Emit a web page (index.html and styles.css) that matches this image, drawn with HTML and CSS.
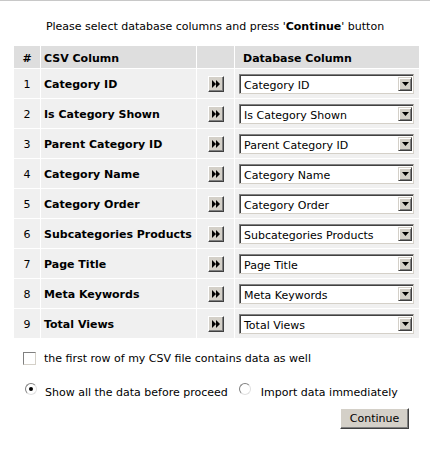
FILE: index.html
```html
<!DOCTYPE html>
<html>
<head>
<meta charset="utf-8">
<link rel="stylesheet" href="styles.css">
</head>
<body>
<div class="topline"></div>
<p class="intro">Please select database columns and press '<b>Continue</b>' button</p>
<div class="grid">
  <div class="hd num">#</div>
  <div class="hd csv">CSV Column</div>
  <div class="hd"></div>
  <div class="hd db">Database Column</div>

  <div class="c num">1</div><div class="c csv">Category ID</div><div class="c act"><span class="ff"><svg width="10" height="8" viewBox="0 0 10 8"><path d="M1 0L5 4L1 8ZM5 0L9 4L5 8Z" fill="#000"/></svg></span></div><div class="c db"><div class="sel"><span class="val">Category ID</span><span class="arr"><svg width="7" height="4" viewBox="0 0 7 4"><path d="M0 0H7L3.5 4Z" fill="#000"/></svg></span></div></div>

  <div class="c num">2</div><div class="c csv">Is Category Shown</div><div class="c act"><span class="ff"><svg width="10" height="8" viewBox="0 0 10 8"><path d="M1 0L5 4L1 8ZM5 0L9 4L5 8Z" fill="#000"/></svg></span></div><div class="c db"><div class="sel"><span class="val">Is Category Shown</span><span class="arr"><svg width="7" height="4" viewBox="0 0 7 4"><path d="M0 0H7L3.5 4Z" fill="#000"/></svg></span></div></div>

  <div class="c num">3</div><div class="c csv">Parent Category ID</div><div class="c act"><span class="ff"><svg width="10" height="8" viewBox="0 0 10 8"><path d="M1 0L5 4L1 8ZM5 0L9 4L5 8Z" fill="#000"/></svg></span></div><div class="c db"><div class="sel"><span class="val">Parent Category ID</span><span class="arr"><svg width="7" height="4" viewBox="0 0 7 4"><path d="M0 0H7L3.5 4Z" fill="#000"/></svg></span></div></div>

  <div class="c num">4</div><div class="c csv">Category Name</div><div class="c act"><span class="ff"><svg width="10" height="8" viewBox="0 0 10 8"><path d="M1 0L5 4L1 8ZM5 0L9 4L5 8Z" fill="#000"/></svg></span></div><div class="c db"><div class="sel"><span class="val">Category Name</span><span class="arr"><svg width="7" height="4" viewBox="0 0 7 4"><path d="M0 0H7L3.5 4Z" fill="#000"/></svg></span></div></div>

  <div class="c num">5</div><div class="c csv">Category Order</div><div class="c act"><span class="ff"><svg width="10" height="8" viewBox="0 0 10 8"><path d="M1 0L5 4L1 8ZM5 0L9 4L5 8Z" fill="#000"/></svg></span></div><div class="c db"><div class="sel"><span class="val">Category Order</span><span class="arr"><svg width="7" height="4" viewBox="0 0 7 4"><path d="M0 0H7L3.5 4Z" fill="#000"/></svg></span></div></div>

  <div class="c num">6</div><div class="c csv">Subcategories Products</div><div class="c act"><span class="ff"><svg width="10" height="8" viewBox="0 0 10 8"><path d="M1 0L5 4L1 8ZM5 0L9 4L5 8Z" fill="#000"/></svg></span></div><div class="c db"><div class="sel"><span class="val">Subcategories Products</span><span class="arr"><svg width="7" height="4" viewBox="0 0 7 4"><path d="M0 0H7L3.5 4Z" fill="#000"/></svg></span></div></div>

  <div class="c num">7</div><div class="c csv">Page Title</div><div class="c act"><span class="ff"><svg width="10" height="8" viewBox="0 0 10 8"><path d="M1 0L5 4L1 8ZM5 0L9 4L5 8Z" fill="#000"/></svg></span></div><div class="c db"><div class="sel"><span class="val">Page Title</span><span class="arr"><svg width="7" height="4" viewBox="0 0 7 4"><path d="M0 0H7L3.5 4Z" fill="#000"/></svg></span></div></div>

  <div class="c num">8</div><div class="c csv">Meta Keywords</div><div class="c act"><span class="ff"><svg width="10" height="8" viewBox="0 0 10 8"><path d="M1 0L5 4L1 8ZM5 0L9 4L5 8Z" fill="#000"/></svg></span></div><div class="c db"><div class="sel"><span class="val">Meta Keywords</span><span class="arr"><svg width="7" height="4" viewBox="0 0 7 4"><path d="M0 0H7L3.5 4Z" fill="#000"/></svg></span></div></div>

  <div class="c num">9</div><div class="c csv">Total Views</div><div class="c act"><span class="ff"><svg width="10" height="8" viewBox="0 0 10 8"><path d="M1 0L5 4L1 8ZM5 0L9 4L5 8Z" fill="#000"/></svg></span></div><div class="c db"><div class="sel"><span class="val">Total Views</span><span class="arr"><svg width="7" height="4" viewBox="0 0 7 4"><path d="M0 0H7L3.5 4Z" fill="#000"/></svg></span></div></div>
</div>

<div class="opt chk-line"><span class="chk"></span><span>the first row of my CSV file contains data as well</span></div>
<div class="opt radio-line">
  <span class="radio on"></span><span>Show all the data before proceed</span>
  <span class="radio second"></span><span>Import data immediately</span>
</div>
<div class="actions"><button class="btn">Continue</button></div>
</body>
</html>
```
FILE: styles.css
```css
html, body { margin: 0; padding: 0; background: #fff; }
body {
  font-family: "DejaVu Sans", Verdana, sans-serif;
  font-size: 11px;
  color: #000;
  width: 430px;
}
.topline { height: 1px; background: #c8c8c8; }
.intro { margin: 19px 0 0 0; height: 26px; text-align: center; line-height: 13px; }
.intro b { font-weight: bold; }
.grid {
  margin-left: 14px;
  width: 405px;
  display: grid;
  grid-template-columns: 26px 155px 37px 184px;
  grid-template-rows: 22px;
  grid-auto-rows: 29px;
  column-gap: 1px;
  row-gap: 1px;
}
.hd { background: #dedede; font-weight: bold; display: flex; align-items: center; padding-top: 2px; box-sizing: border-box; }
.c { background: #f0f0f0; display: flex; align-items: center; padding-top: 2px; box-sizing: border-box; }
.num { justify-content: center; }
.csv { padding-left: 3px; font-weight: bold; }
.hd.db { padding-left: 8px; }
.db { padding-left: 4px; }
.act { justify-content: center; padding-top: 0; }
.c.db { padding-top: 1px; }
.ff {
  width: 14px; height: 14px;
  background: #d4d0c8;
  border-top: 1px solid #fff; border-left: 1px solid #fff;
  border-right: 1px solid #404040; border-bottom: 1px solid #404040;
  box-shadow: inset -1px -1px 0 #808080;
  display: flex; align-items: center; justify-content: center;
}
.ff svg { display: block; }
.sel {
  width: 170px; height: 16px;
  background: #fff;
  border-top: 1px solid #808080; border-left: 1px solid #808080;
  border-right: 1px solid #d4d0c8; border-bottom: 1px solid #d4d0c8;
  box-shadow: inset 1px 1px 0 #404040;
  display: flex; align-items: center;
  padding: 1px 1px 1px 2px;
}
.val { flex: 1; padding-left: 2px; padding-top: 2px; font-weight: normal; white-space: nowrap; }
.arr {
  width: 14px; height: 14px;
  background: #d4d0c8;
  border-top: 1px solid #d4d0c8; border-left: 1px solid #d4d0c8;
  border-right: 1px solid #404040; border-bottom: 1px solid #404040;
  box-shadow: inset 1px 1px 0 #fff, inset -1px -1px 0 #808080;
  box-sizing: border-box;
  display: flex; align-items: center; justify-content: center;
}
.arr svg { display: block; }
.opt { display: flex; align-items: center; margin-left: 23px; }
.chk-line { margin-top: 14px; height: 13px; }
.chk {
  width: 11px; height: 11px; background: #fff;
  border-top: 1px solid #808080; border-left: 1px solid #808080;
  border-right: 1px solid #d4d0c8; border-bottom: 1px solid #d4d0c8;
  margin-right: 8px;
}
.radio-line { margin-top: 20px; height: 14px; margin-left: 25px; }
.radio {
  width: 10px; height: 10px; border-radius: 50%;
  background: #fff;
  border: 1px solid;
  border-color: #808080 #e0e0e0 #e0e0e0 #808080;
  margin-right: 8px;
  position: relative; top: -3px;
  box-sizing: content-box;
}
.radio.on::after {
  content: ""; position: absolute; left: 3px; top: 3px;
  width: 4px; height: 4px; border-radius: 50%; background: #000;
}
.radio.second { margin-left: 11px; margin-right: 10px; }
.actions { display: flex; justify-content: flex-end; padding-right: 21px; margin-top: 9px; }
.btn {
  font-family: "DejaVu Sans", Verdana, sans-serif; font-size: 11px;
  width: 69px; height: 21px;
  background: #d4d0c8;
  border-top: 1px solid #fff; border-left: 1px solid #fff;
  border-right: 1px solid #404040; border-bottom: 1px solid #404040;
  box-shadow: inset -1px -1px 0 #808080;
  padding: 0;
  color: #000;
}
```
